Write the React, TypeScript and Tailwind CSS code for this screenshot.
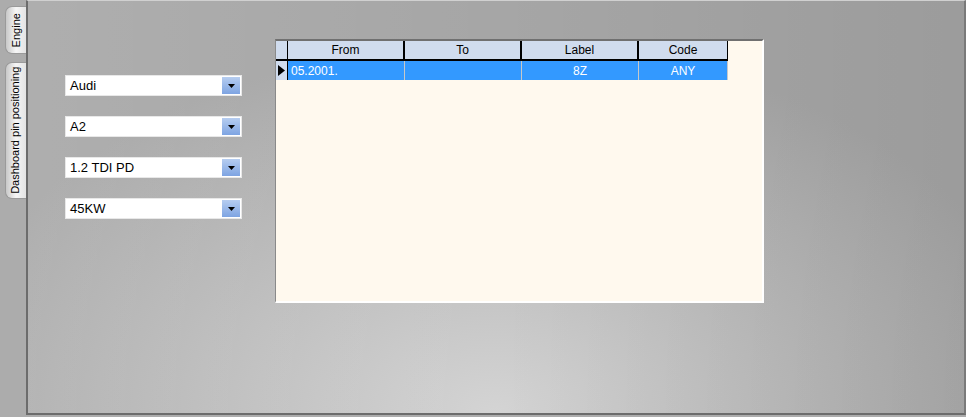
import React from "react";

const font = { fontFamily: '"Liberation Sans", Arial, sans-serif' };

const combos = ["Audi", "A2", "1.2 TDI PD", "45KW"];

function Combo({ value }: { value: string }) {
  return (
    <div className="flex h-[21px] w-[177px] items-center border border-[#e8e8e8] bg-white">
      <span className="flex-1 pl-[4px] text-[13px] text-black">{value}</span>
      <div className="mr-[1px] flex h-[17px] w-[18px] items-center justify-center bg-gradient-to-b from-[#b6cdf0] to-[#7ea4e2]">
        <svg width="7" height="4" viewBox="0 0 7 4">
          <path d="M0 0h7L3.5 4z" fill="#000" />
        </svg>
      </div>
    </div>
  );
}

function Tab({ label, h }: { label: string; h: string }) {
  return (
    <div
      className={`flex w-[21px] items-center justify-center rounded-l-[7px] border border-r-0 border-[#9a9a9a] bg-gradient-to-r from-[#c8c8c8] via-[#f6f6f6] to-[#e4e4e4] ${h}`}
    >
      <span className="-rotate-90 whitespace-nowrap text-[11px] text-black">{label}</span>
    </div>
  );
}

export default function App() {
  const cols = [
    { name: "From", w: "w-[117px]" },
    { name: "To", w: "w-[117px]" },
    { name: "Label", w: "w-[117px]" },
    { name: "Code", w: "w-[89px]" },
  ];
  const row = ["05.2001.", "", "8Z", "ANY"];

  return (
    <div className="flex h-[417px] w-[966px] bg-[#acacac]" style={font}>
      <div className="flex w-[26px] flex-col items-end gap-[8px] pt-[6px]">
        <Tab label="Engine" h="h-[48px]" />
        <Tab label="Dashboard pin positioning" h="h-[137px]" />
      </div>
      <div className="relative h-[415px] flex-1 border-l-2 border-r-2 border-b-2 border-t border-l-[#6c6c6c] border-r-[#7a7a7a] border-b-[#6c6c6c] border-t-[#d0d0d0] bg-[radial-gradient(ellipse_60%_90%_at_50%_100%,#d4d4d4_0%,#b8b8b8_60%,#a6a6a6_100%)]">
        <div className="absolute inset-0 bg-gradient-to-r from-[#ffffff18] via-transparent to-[#00000010]" />
        <div className="relative flex pl-[37px] pt-[38px]">
          <div className="flex flex-col gap-[20px] pt-[36px]">
            {combos.map((c) => (
              <Combo key={c} value={c} />
            ))}
          </div>
          <div className="ml-[33px] h-[264px] w-[489px] border-l border-t-2 border-r-2 border-b-2 border-l-[#8a8a8a] border-t-[#707070] border-r-white border-b-white bg-[#fff9ee]">
            <div className="flex h-[20px]">
              <div className="flex border-b-2 border-black">
                <div className="w-[12px] border-r border-black bg-[#d0dcee]" />
                {cols.map((c, i) => (
                  <div
                    key={c.name}
                    className={`${c.w} flex items-center justify-center bg-[#d0dcee] text-[12px] text-black ${i < 3 ? "border-r-2 border-black" : "border-r border-black"}`}
                  >
                    {c.name}
                  </div>
                ))}
              </div>
            </div>
            <div className="flex h-[19px]">
              <div className="flex w-[12px] items-center border-r border-black bg-[#d0dcee]">
                <svg width="8" height="11" viewBox="0 0 8 11" className="ml-[2px]">
                  <path d="M0 0l7 5.5L0 11z" fill="#000" />
                </svg>
              </div>
              {cols.map((c, i) => (
                <div
                  key={c.name}
                  className={`${c.w} flex items-center border-r border-[#c8c8c8] bg-[#3399ff] text-[12px] text-white ${i === 0 ? "pl-[3px]" : "justify-center"}`}
                >
                  {row[i]}
                </div>
              ))}
            </div>
          </div>
        </div>
      </div>
    </div>
  );
}
